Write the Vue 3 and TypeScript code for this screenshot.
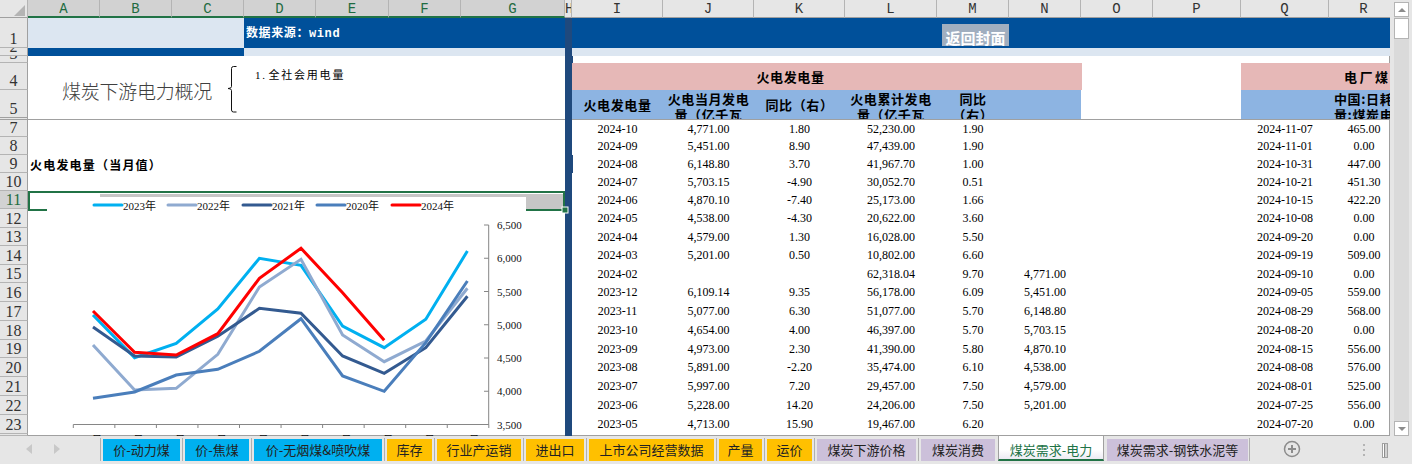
<script setup lang="ts">
const columns = ['A', 'B', 'C', 'D', 'E', 'F', 'G', 'H', 'I', 'J', 'K', 'L', 'M', 'N', 'O', 'P', 'Q', 'R']
const selectedColumns = 'ABCDEFG'

const rows: string[][] = [
  ['7', '2024-10', '4,771.00', '1.80', '52,230.00', '1.90', '', '', '', '2024-11-07', '465.00'],
  ['8', '2024-09', '5,451.00', '8.90', '47,439.00', '1.90', '', '', '', '2024-11-01', '0.00'],
  ['9', '2024-08', '6,148.80', '3.70', '41,967.70', '1.00', '', '', '', '2024-10-31', '447.00'],
  ['10', '2024-07', '5,703.15', '-4.90', '30,052.70', '0.51', '', '', '', '2024-10-21', '451.30'],
  ['11', '2024-06', '4,870.10', '-7.40', '25,173.00', '1.66', '', '', '', '2024-10-15', '422.20'],
  ['12', '2024-05', '4,538.00', '-4.30', '20,622.00', '3.60', '', '', '', '2024-10-08', '0.00'],
  ['13', '2024-04', '4,579.00', '1.30', '16,028.00', '5.50', '', '', '', '2024-09-20', '0.00'],
  ['14', '2024-03', '5,201.00', '0.50', '10,802.00', '6.60', '', '', '', '2024-09-19', '509.00'],
  ['15', '2024-02', '', '', '62,318.04', '9.70', '4,771.00', '', '', '2024-09-10', '0.00'],
  ['16', '2023-12', '6,109.14', '9.35', '56,178.00', '6.09', '5,451.00', '', '', '2024-09-05', '559.00'],
  ['17', '2023-11', '5,077.00', '6.30', '51,077.00', '5.70', '6,148.80', '', '', '2024-08-29', '568.00'],
  ['18', '2023-10', '4,654.00', '4.00', '46,397.00', '5.70', '5,703.15', '', '', '2024-08-20', '0.00'],
  ['19', '2023-09', '4,973.00', '2.30', '41,390.00', '5.80', '4,870.10', '', '', '2024-08-15', '556.00'],
  ['20', '2023-08', '5,891.00', '-2.20', '35,474.00', '6.10', '4,538.00', '', '', '2024-08-08', '576.00'],
  ['21', '2023-07', '5,997.00', '7.20', '29,457.00', '7.50', '4,579.00', '', '', '2024-08-01', '525.00'],
  ['22', '2023-06', '5,228.00', '14.20', '24,206.00', '7.50', '5,201.00', '', '', '2024-07-25', '556.00'],
  ['23', '2023-05', '4,713.00', '15.90', '19,467.00', '6.20', '', '', '', '2024-07-20', '0.00'],
]
const upperRows = rows.slice(0, 4)
const lowerRows = rows.slice(4)

const headers = [
  { text: '火电发电量', two: false },
  { text: '火电当月发电\n量（亿千瓦', two: true },
  { text: '同比（右）', two: false },
  { text: '火电累计发电\n量（亿千瓦', two: true },
  { text: '同比\n（右）', two: true },
  { text: '', two: false },
]

const px = (i: number) => 93 + 41.6 * i
const series = [
  { name: '2023年', color: '#00b0f0', lx: 94, ys: [314, 356.7, 342.3, 308, 257.3, 264.3, 325, 346.7, 318.3, 250] },
  { name: '2022年', color: '#8faad0', lx: 168, ys: [344, 389, 387.3, 353.3, 286, 258.3, 334, 360.7, 340, 287.3] },
  { name: '2021年', color: '#335a90', lx: 243, ys: [326, 355, 356, 335.3, 307.3, 312.3, 355, 372.3, 346.7, 295.3] },
  { name: '2020年', color: '#4a7ebb', lx: 317, ys: [397.3, 391, 374, 368.3, 350.3, 317.7, 375, 390.3, 341.7, 280] },
  { name: '2024年', color: '#ff0000', lx: 392, ys: [310, 351.3, 354, 332.7, 277.3, 247.3, 291.7, 339.3] },
].map((s) => ({ ...s, points: s.ys.map((y, i) => `${px(i).toFixed(1)},${y}`).join(' ') }))

const axisLabels = ['6,500', '6,000', '5,500', '5,000', '4,500', '4,000', '3,500'].map((text, i) => ({
  text,
  y: 224 + i * 33.25,
}))
const xTicks = Array.from({ length: 11 }, (_, i) => 73.3 + i * 41.55)
const months = Array.from({ length: 10 }, (_, i) => ({ text: `${i + 1}月`, x: px(i) + 1 }))

const tabs = [
  { name: '价-动力煤', w: 77, kind: 'blue' },
  { name: '价-焦煤', w: 64, kind: 'blue' },
  { name: '价-无烟煤&喷吹煤', w: 128, kind: 'blue' },
  { name: '库存', w: 45, kind: 'amber' },
  { name: '行业产运销', w: 84, kind: 'amber' },
  { name: '进出口', w: 58, kind: 'amber' },
  { name: '上市公司经营数据', w: 125, kind: 'amber' },
  { name: '产量', w: 43, kind: 'amber' },
  { name: '运价', w: 45, kind: 'amber' },
  { name: '煤炭下游价格', w: 99, kind: 'purple' },
  { name: '煤炭消费', w: 74, kind: 'purple' },
  { name: '煤炭需求-电力', w: 106, kind: 'active' },
  { name: '煤炭需求-钢铁水泥等', w: 141, kind: 'purple' },
]
</script>

<template>
  <div class="page">
    <div class="top">
      <div class="sheet">
        <div class="corner"><i></i></div>
        <div
          v-for="c in columns"
          :key="c"
          class="col-head"
          :class="{ selected: selectedColumns.includes(c) }"
        >{{ c }}</div>

        <div class="band"><i class="nub nub-a"></i><i class="nub nub-b"></i></div>

        <div class="row-head">1</div>
        <div class="light s3"></div>
        <div class="blue s4 source">数据来源：wind</div>
        <div class="blue s4"></div>
        <div class="blue"><span class="back">返回封面</span></div>
        <div class="blue s5"></div>

        <div class="row-head">2</div>
        <div class="blue s3"></div>
        <div class="light s4"></div>
        <div class="light s10"></div>

        <div class="row-head">3</div>
        <div class="s7"></div>
        <div class="s10"></div>

        <div class="row-head">4</div>
        <div class="s7 r2 intro">
          <span class="title">煤炭下游电力概况</span>
          <svg class="brace" width="10" height="48" viewBox="0 0 10 48">
            <path d="M9.5 1.5H6.5Q4.5 1.5 4.5 3.5V21.5Q4.5 23.5 1 23.5Q4.5 23.5 4.5 25.5V45Q4.5 47 6.5 47H9.5" fill="none" stroke="#111" stroke-width="1" />
          </svg>
          <span class="item">1. 全社会用电量</span>
        </div>
        <div class="pink s6 pink-main">火电发电量</div>
        <div class="s2"></div>
        <div class="pink s2 pink-side"><span>电厂煤炭</span></div>

        <div class="row-head freeze-head">5</div>
        <div
          v-for="(h, i) in headers"
          :key="i"
          class="hd freeze"
          :class="{ two: h.two }"
        >{{ h.text }}</div>
        <div class="s2 freeze"></div>
        <div class="hd freeze"></div>
        <div class="hd freeze side-hd">中国:日耗<br />量:煤炭电</div>

        <template v-for="r in upperRows" :key="r[0]">
          <div class="row-head">{{ r[0] }}</div>
          <div class="s7 caption">{{ r[0] === '9' ? '火电发电量（当月值）' : '' }}</div>
          <div v-for="(v, i) in r.slice(1)" :key="i" class="cell">{{ v }}</div>
        </template>

        <div class="chart">
          <svg width="537" height="244" viewBox="28 190 537 244" class="chart-svg">
            <rect x="100" y="193" width="464" height="3" fill="#c6c6c6" />
            <rect x="526" y="196" width="37" height="12" fill="#c6c6c6" />
            <path d="M47 209H29V191H564V209H526" fill="none" stroke="#217346" stroke-width="2" />
            <rect x="562" y="206" width="6" height="6" fill="#217346" stroke="#fff" stroke-width="1" />

            <g v-for="s in series" :key="s.name">
              <line :x1="s.lx" :x2="s.lx + 28" y1="204" y2="204" :stroke="s.color" stroke-width="3" stroke-linecap="round" />
              <text :x="s.lx + 29" y="208.5" class="chart-text">{{ s.name }}</text>
            </g>

            <path d="M488.7 224V423.5H73.3" fill="none" stroke="#868686" stroke-width="1" />
            <line v-for="t in xTicks" :key="t" :x1="t" :x2="t" y1="423.5" y2="427" stroke="#868686" />
            <g v-for="a in axisLabels" :key="a.text">
              <line x1="484" x2="488.7" :y1="a.y" :y2="a.y" stroke="#868686" />
              <text x="497" :y="a.y + 4" class="chart-text">{{ a.text }}</text>
            </g>
            <text v-for="m in months" :key="m.text" :x="m.x" y="443" text-anchor="middle" class="chart-text">{{ m.text }}</text>

            <polyline
              v-for="s in series"
              :key="s.color"
              :points="s.points"
              fill="none"
              :stroke="s.color"
              stroke-width="3"
              stroke-linejoin="miter"
            />
          </svg>
        </div>

        <template v-for="r in lowerRows" :key="r[0]">
          <div class="row-head" :class="{ selected: r[0] === '11' }">{{ r[0] }}</div>
          <div v-for="(v, i) in r.slice(1)" :key="i" class="cell">{{ v }}</div>
        </template>
        <div class="row-head"></div>
      </div>

      <div class="vscroll">
        <div class="vbtn"><i class="up"></i></div>
        <div class="vtrack"><div class="thumb"></div></div>
        <div class="vbtn"><i class="down"></i></div>
      </div>
    </div>

    <div class="strip">
      <div class="nav">
        <svg width="6" height="10" viewBox="0 0 6 10"><path d="M6 0V10L0 5Z" fill="#c8c8c8" /></svg>
        <svg width="6" height="10" viewBox="0 0 6 10"><path d="M0 0V10L6 5Z" fill="#c8c8c8" /></svg>
      </div>
      <div class="tabs">
        <div
          v-for="t in tabs"
          :key="t.name"
          class="tab"
          :class="t.kind"
          :style="{ width: t.w + 'px' }"
        >{{ t.name }}</div>
      </div>
      <svg class="plus" width="18" height="18" viewBox="0 0 18 18">
        <circle cx="9" cy="9" r="7.5" fill="none" stroke="#8c8c8c" stroke-width="1.5" />
        <path d="M5 9H13M9 5V13" stroke="#8c8c8c" stroke-width="2" />
      </svg>
      <div class="dots"><i></i><i></i><i></i></div>
      <div class="splitter"></div>
    </div>
  </div>
</template>

<style>
html,
body {
  margin: 0;
  background: #fff;
  overflow: hidden;
}
</style>

<style scoped>
.page {
  width: 1412px;
  height: 464px;
  display: flex;
  flex-direction: column;
  overflow: hidden;
  font-family: "Liberation Serif", "Noto Sans CJK SC", serif;
  color: #000;
  background: #e6e6e6;
}
.top {
  display: flex;
  height: 436px;
}
.sheet {
  width: 1390px;
  height: 436px;
  flex: none;
  overflow: hidden;
  background: #fff;
  display: grid;
  grid-template-columns: 28px 72px 72px 72px 72px 73px 72px 104px 7px 91px 91px 91px 92px 72px 72px 72px 88px 88px 70px;
  grid-template-rows: 18px 30px 8px 7px 27px 30px 17px 18px 18px 18px 18px 19px 18px 19px 18px 19px 19px 19px 18px 19px 19px 19px 19px 2px;
  box-shadow: inset 0 -1px 0 #a0a0a0, inset -1px 0 0 #a0a0a0;
}
.corner {
  background: #e6e6e6;
  border-right: 1px solid #b4b4b4;
  border-bottom: 1px solid #a0a0a0;
  box-sizing: border-box;
  position: relative;
}
.corner i {
  position: absolute;
  left: 14px;
  top: 5px;
  width: 0;
  height: 0;
  border-style: solid;
  border-width: 0 0 11px 11px;
  border-color: transparent transparent #b4b4b4 transparent;
}
.col-head {
  background: #e6e6e6;
  border-right: 1px solid #b4b4b4;
  border-bottom: 1px solid #a0a0a0;
  box-sizing: border-box;
  font: 14px/18px "Liberation Mono", monospace;
  text-align: center;
  color: #333;
  overflow: hidden;
}
.col-head.selected {
  background: #d2d2d2;
  border-bottom: 2px solid #217346;
  color: #1e6b41;
}
.row-head {
  background: #e6e6e6;
  border-right: 1px solid #a0a0a0;
  border-bottom: 1px solid #b4b4b4;
  box-sizing: border-box;
  font: 16px/1 "Liberation Serif", serif;
  color: #333;
  display: flex;
  align-items: flex-end;
  justify-content: center;
  overflow: hidden;
}
.row-head.selected {
  background: #d2d2d2;
  color: #1e6b41;
}
.freeze-head {
  border-bottom: 3px double #a0a0a0;
}
.s2 { grid-column: span 2; }
.s3 { grid-column: span 3; }
.s4 { grid-column: span 4; }
.s5 { grid-column: span 5; }
.s6 { grid-column: span 6; }
.s7 { grid-column: span 7; }
.s10 { grid-column: span 10; }
.r2 { grid-row: span 2; }
.band {
  grid-column: 9;
  grid-row: 2 / -1;
  background: #1f497d;
  position: relative;
  z-index: 1;
}
.nub {
  position: absolute;
  left: 7px;
  width: 1px;
  background: #1f497d;
}
.nub-a { top: 38px; height: 7px; }
.nub-b { top: 137px; height: 18px; }
.blue { background: #00509a; overflow: hidden; }
.light { background: #dce6f1; }
.source {
  color: #fff;
  font: bold 12px/33px "Liberation Mono", "Noto Sans CJK SC", monospace;
  letter-spacing: 0.6px;
  padding-left: 2px;
  white-space: nowrap;
}
.back {
  display: block;
  width: 67px;
  height: 22px;
  margin: 6px 0 0 5px;
  background: #a0aebf;
  color: #fff;
  font: bold 15px/28px "Noto Sans CJK SC", sans-serif;
  text-align: center;
  overflow: hidden;
}
.intro {
  display: flex;
  align-items: center;
  border-bottom: 1px solid #a0a0a0;
  box-sizing: border-box;
  overflow: hidden;
}
.title {
  margin-left: 34px;
  font: 300 19px/24px "Noto Sans CJK SC", sans-serif;
  letter-spacing: -0.25px;
  color: #3f3f3f;
  white-space: nowrap;
}
.brace {
  margin: -4px 0 0 15px;
  flex: none;
}
.item {
  align-self: flex-start;
  margin: 4px 0 0 18px;
  font: 11px/16px "Liberation Serif", "Noto Sans CJK SC", serif;
  letter-spacing: 1.8px;
  word-spacing: -3px;
  white-space: nowrap;
}
.pink {
  background: #e6b8b7;
  font: bold 13px/27px "Noto Sans CJK SC", sans-serif;
  letter-spacing: 0.6px;
  color: #000;
  white-space: nowrap;
}
.pink-main {
  text-align: center;
  margin-right: -1px;
  padding-right: 73px;
}
.pink-side span {
  display: block;
  margin-left: 103px;
  letter-spacing: 2.5px;
}
.hd {
  background: #8db4e2;
  font: bold 13px/29px "Noto Sans CJK SC", sans-serif;
  letter-spacing: 0.6px;
  color: #000;
  text-align: center;
  white-space: pre-line;
  overflow: hidden;
}
.hd.two {
  line-height: 16px;
  padding-top: 1px;
}
.side-hd {
  text-align: left;
  line-height: 16px;
  padding-left: 5px;
  padding-top: 1px;
  white-space: nowrap;
}
.freeze {
  border-bottom: 1px solid #a0a0a0;
  box-sizing: border-box;
}
.cell {
  font-size: 12px;
  line-height: 18px;
  text-align: center;
  white-space: nowrap;
  overflow: hidden;
}
.caption {
  font: bold 12px/20px "Noto Sans CJK SC", sans-serif;
  letter-spacing: 1.2px;
  padding-left: 2px;
  color: #000;
  white-space: nowrap;
}
.chart {
  grid-column: 2 / 9;
  grid-row: 11 / 24;
  position: relative;
  z-index: 2;
  background: #fff;
}
.chart-svg {
  display: block;
  overflow: visible;
}
.chart-text {
  font: 11px "Liberation Serif", "Noto Sans CJK SC", serif;
  fill: #111;
}
.vscroll {
  flex: 1;
  display: flex;
  flex-direction: column;
  padding: 2px 3px 0 4px;
  background: #e6e6e6;
}
.vbtn {
  height: 15px;
  flex: none;
  background: #fff;
  border: 1px solid #b4b4b4;
  box-sizing: border-box;
  display: flex;
  align-items: center;
  justify-content: center;
}
.up,
.down {
  width: 0;
  height: 0;
  border-style: solid;
  border-color: transparent;
  border-width: 4px;
}
.up {
  border-top-width: 0;
  border-bottom-color: #8c8c8c;
}
.down {
  border-bottom-width: 0;
  border-top-color: #8c8c8c;
}
.vtrack {
  flex: 1;
  background: #dadada;
  padding-top: 1px;
}
.thumb {
  height: 21px;
  background: #fff;
  border: 1px solid #b4b4b4;
  box-sizing: border-box;
}
.strip {
  height: 28px;
  flex: none;
  display: flex;
  align-items: flex-start;
  background: #e6e6e6;
  position: relative;
}
.nav {
  width: 100px;
  height: 26px;
  box-sizing: border-box;
  padding-left: 26px;
  display: flex;
  gap: 22px;
  align-items: center;
  flex: none;
}
.tabs {
  display: flex;
  align-items: flex-start;
  gap: 5px;
  padding: 3px 0 0 3px;
  position: relative;
  flex: none;
}
.tabs::before {
  content: "";
  position: absolute;
  left: 0;
  top: 2px;
  width: 1px;
  height: 23px;
  background: #b0b0b0;
}
.tabs::after {
  content: "";
  position: absolute;
  right: -2px;
  top: 2px;
  width: 1px;
  height: 23px;
  background: #b0b0b0;
}
.tab {
  height: 22px;
  flex: none;
  font: 13px/21px "Noto Sans CJK SC", sans-serif;
  text-align: center;
  color: #222;
  white-space: nowrap;
  position: relative;
}
.tab + .tab::before {
  content: "";
  position: absolute;
  left: -3px;
  top: -1px;
  width: 1px;
  height: 23px;
  background: #b0b0b0;
}
.tab.blue { background: #00b0f0; overflow: visible; }
.amber { background: #ffc000; }
.purple { background: #ccc0da; }
.active {
  margin: -3px -2px 0;
  height: 25px;
  line-height: 27px;
  color: #217346;
  background: linear-gradient(#fff 60%, #eceaf3);
  border-left: 1px solid #a0a0a0;
  border-right: 1px solid #a0a0a0;
  border-bottom: 2px solid #217346;
  box-sizing: border-box;
}
.active::before,
.active + .tab::before {
  display: none;
}
.plus {
  position: absolute;
  left: 1283px;
  top: 4px;
}
.dots {
  position: absolute;
  left: 1363px;
  top: 8px;
  display: flex;
  flex-direction: column;
  gap: 3px;
}
.dots i {
  width: 2px;
  height: 2px;
  background: #b4b4b4;
}
.splitter {
  position: absolute;
  left: 1382px;
  top: 7px;
  width: 6px;
  height: 15px;
  box-sizing: border-box;
  background: linear-gradient(90deg, #fff 0 33%, #8c8c8c 33% 50%, #d2d2d2 50%);
  border: 1px solid #a0a0a0;
}
</style>
